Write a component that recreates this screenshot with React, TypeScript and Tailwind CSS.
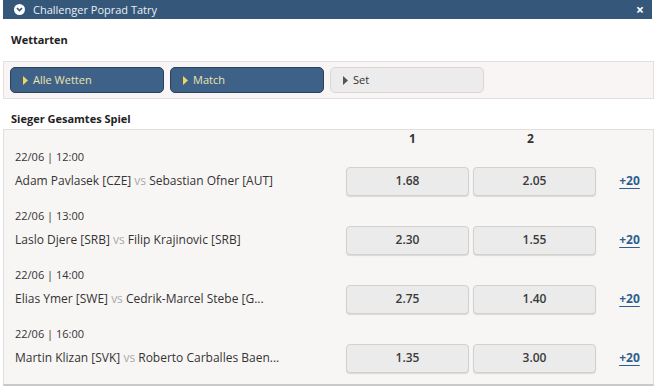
import React from 'react';

type Match = {
    date: string;
    home: string;
    away: string;
    odds: [string, string];
};

const matches: Match[] = [
    { date: '22/06 | 12:00', home: 'Adam Pavlasek [CZE]', away: 'Sebastian Ofner [AUT]', odds: ['1.68', '2.05'] },
    { date: '22/06 | 13:00', home: 'Laslo Djere [SRB]', away: 'Filip Krajinovic [SRB]', odds: ['2.30', '1.55'] },
    { date: '22/06 | 14:00', home: 'Elias Ymer [SWE]', away: 'Cedrik-Marcel Stebe [G...', odds: ['2.75', '1.40'] },
    { date: '22/06 | 16:00', home: 'Martin Klizan [SVK]', away: 'Roberto Carballes Baen...', odds: ['1.35', '3.00'] },
];

const Caret: React.FC<{ className: string }> = ({ className }) => (
    <svg width="5" height="9" viewBox="0 0 5 9" className={className}>
        <path d="M0 0 L5 4.5 L0 9 Z" fill="currentColor" />
    </svg>
);

const Tab: React.FC<{ label: string; active?: boolean }> = ({ label, active }) => (
    <div
        className={
            active
                ? 'w-[154px] h-[26px] flex items-center gap-[5px] pl-[12px] rounded-[5px] border border-[#28435f] bg-[#3e6287] text-[#ede2ae] text-[11px]'
                : 'w-[154px] h-[26px] flex items-center gap-[5px] pl-[12px] rounded-[5px] border border-[#d9d6d4] bg-[#ececec] text-[#333] text-[11px]'
        }
    >
        <Caret className={active ? 'text-[#f1d267]' : 'text-[#555]'} />
        <span>{label}</span>
    </div>
);

const OddButton: React.FC<{ value: string }> = ({ value }) => (
    <div className="w-[123px] h-[29px] flex items-center justify-center rounded-[4px] border border-[#d3d1d0] bg-[#ebebeb] shadow-[0_1px_1px_rgba(0,0,0,0.12)] text-[12px] font-semibold text-[#3a3a3a]">
        {value}
    </div>
);

export default function App() {
    return (
        <div
            className="w-[657px] h-[392px] bg-white px-[3px] overflow-hidden"
            style={{ fontFamily: '"Open Sans", "Noto Sans", sans-serif' }}
        >
            {/* title bar */}
            <div className="h-[19px] w-[649px] bg-[#34577a] flex items-center pl-[11px] pr-[8px] text-[#e9eff5]">
                <div className="w-[11px] h-[11px] rounded-full bg-white flex items-center justify-center">
                    <svg width="7" height="5" viewBox="0 0 7 5">
                        <path d="M1 1 L3.5 3.5 L6 1" stroke="#34577a" strokeWidth="1.6" fill="none" />
                    </svg>
                </div>
                <span className="ml-[8px] text-[11px] leading-none">Challenger Poprad Tatry</span>
                <span className="ml-auto text-[14px] leading-none font-bold text-white">×</span>
            </div>

            <div className="h-[42px] flex items-center pl-[8px] text-[11px] font-bold text-[#222]">Wettarten</div>

            {/* tabs */}
            <div className="h-[38px] border border-[#e4e0de] bg-[#f8f5f4] flex items-center gap-[6px] pl-[6px]">
                <Tab label="Alle Wetten" active />
                <Tab label="Match" active />
                <Tab label="Set" />
            </div>

            <div className="h-[30px] flex items-center pl-[8px] pt-[10px] text-[11px] font-bold text-[#222]">Sieger Gesamtes Spiel</div>

            {/* market */}
            <div className="h-[257px] border border-[#e2dedb] border-b-[#c9c9c9] border-b-2 bg-[#f8f6f5]">
                <div className="h-[18px] flex items-center text-[12px] font-bold text-[#333]">
                    <div className="w-[342px]" />
                    <div className="w-[123px] text-center pl-[10px]">1</div>
                    <div className="w-[4px]" />
                    <div className="w-[123px] text-center pr-[8px]">2</div>
                </div>

                {matches.map((m) => (
                    <div key={m.date} className="pb-[11px]">
                        <div className="h-[18px] flex items-center pl-[11px] text-[11px] text-[#333]">{m.date}</div>
                        <div className="h-[30px] flex items-center">
                            <div className="w-[342px] pl-[11px] text-[12px] text-[#333] whitespace-nowrap">
                                {m.home} <span className="text-[#aaa]">vs</span> {m.away}
                            </div>
                            <div className="flex gap-[4px]">
                                <OddButton value={m.odds[0]} />
                                <OddButton value={m.odds[1]} />
                            </div>
                            <div className="flex-1 flex justify-center pl-[10px]">
                                <span className="text-[12px] font-bold text-[#2d5f8e] underline underline-offset-[3px]">+20</span>
                            </div>
                        </div>
                    </div>
                ))}
            </div>
        </div>
    );
}
